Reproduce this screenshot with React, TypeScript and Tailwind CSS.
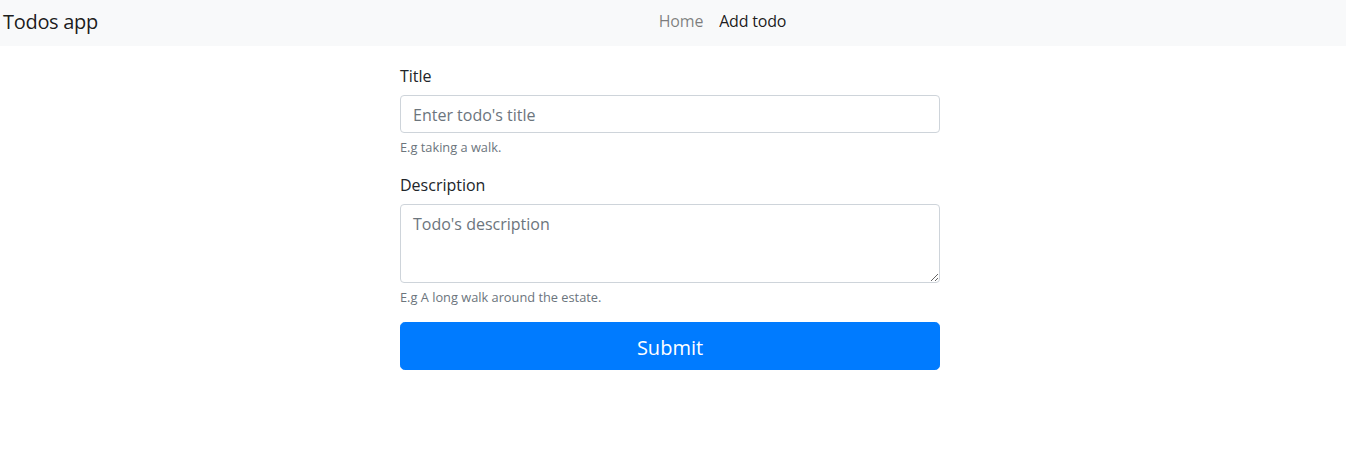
import React from "react";

export default function App() {
  const font = { fontFamily: '"Open Sans", "Noto Sans", sans-serif' };
  return (
    <div className="min-h-[476px] bg-white text-[#212529]" style={font}>
      <nav className="flex items-center h-[46px] bg-[#f8f9fa] px-[3px]">
        <a className="text-[20px] leading-[30px] pb-[2px] text-black/90 mr-1 whitespace-nowrap tracking-[-0.3px]">Todos app</a>
        <ul className="flex mx-auto list-none m-0 p-0 pb-[4px]">
          <li>
            <a className="block px-2 text-[16px] leading-6 text-black/50 tracking-[-0.2px]">Home</a>
          </li>
          <li>
            <a className="block px-2 text-[16px] leading-6 text-black/90 tracking-[-0.2px]">Add todo</a>
          </li>
        </ul>
      </nav>
      <div className="flex justify-center pr-[6px] pt-[17px]">
        <form className="w-[540px]" onSubmit={(e) => e.preventDefault()}>
          <div className="mb-4">
            <label className="block pt-px mb-[7px] text-[16px] leading-6">Title</label>
            <input
              type="text"
              placeholder="Enter todo's title"
              className="block w-full h-[38px] px-3 pt-[7px] pb-[5px] text-[16px] leading-6 border border-[#ced4da] rounded-[4px] bg-white text-[#495057] placeholder:text-[#6c757d] outline-none"
            />
            <small className="block mt-[5px] -mb-px text-[12.8px] leading-[19.2px] text-[#6c757d]">E.g taking a walk.</small>
          </div>
          <div className="mb-4">
            <label className="block pt-px mb-[7px] text-[16px] leading-6">Description</label>
            <textarea
              placeholder="Todo's description"
              className="block w-full h-[79px] px-3 pt-[7px] pb-[5px] text-[16px] leading-6 border border-[#ced4da] rounded-[4px] bg-white text-[#495057] placeholder:text-[#6c757d] outline-none"
              style={font}
            />
            <small className="block mt-[5px] -mb-px text-[12.8px] leading-[19.2px] text-[#6c757d]">E.g A long walk around the estate.</small>
          </div>
          <button
            type="submit"
            className="block w-full h-[48px] px-4 pt-[10px] pb-[6px] text-[20px] leading-[30px] text-white bg-[#007bff] border border-[#007bff] rounded-[4.8px]"
          >
            Submit
          </button>
        </form>
      </div>
    </div>
  );
}
